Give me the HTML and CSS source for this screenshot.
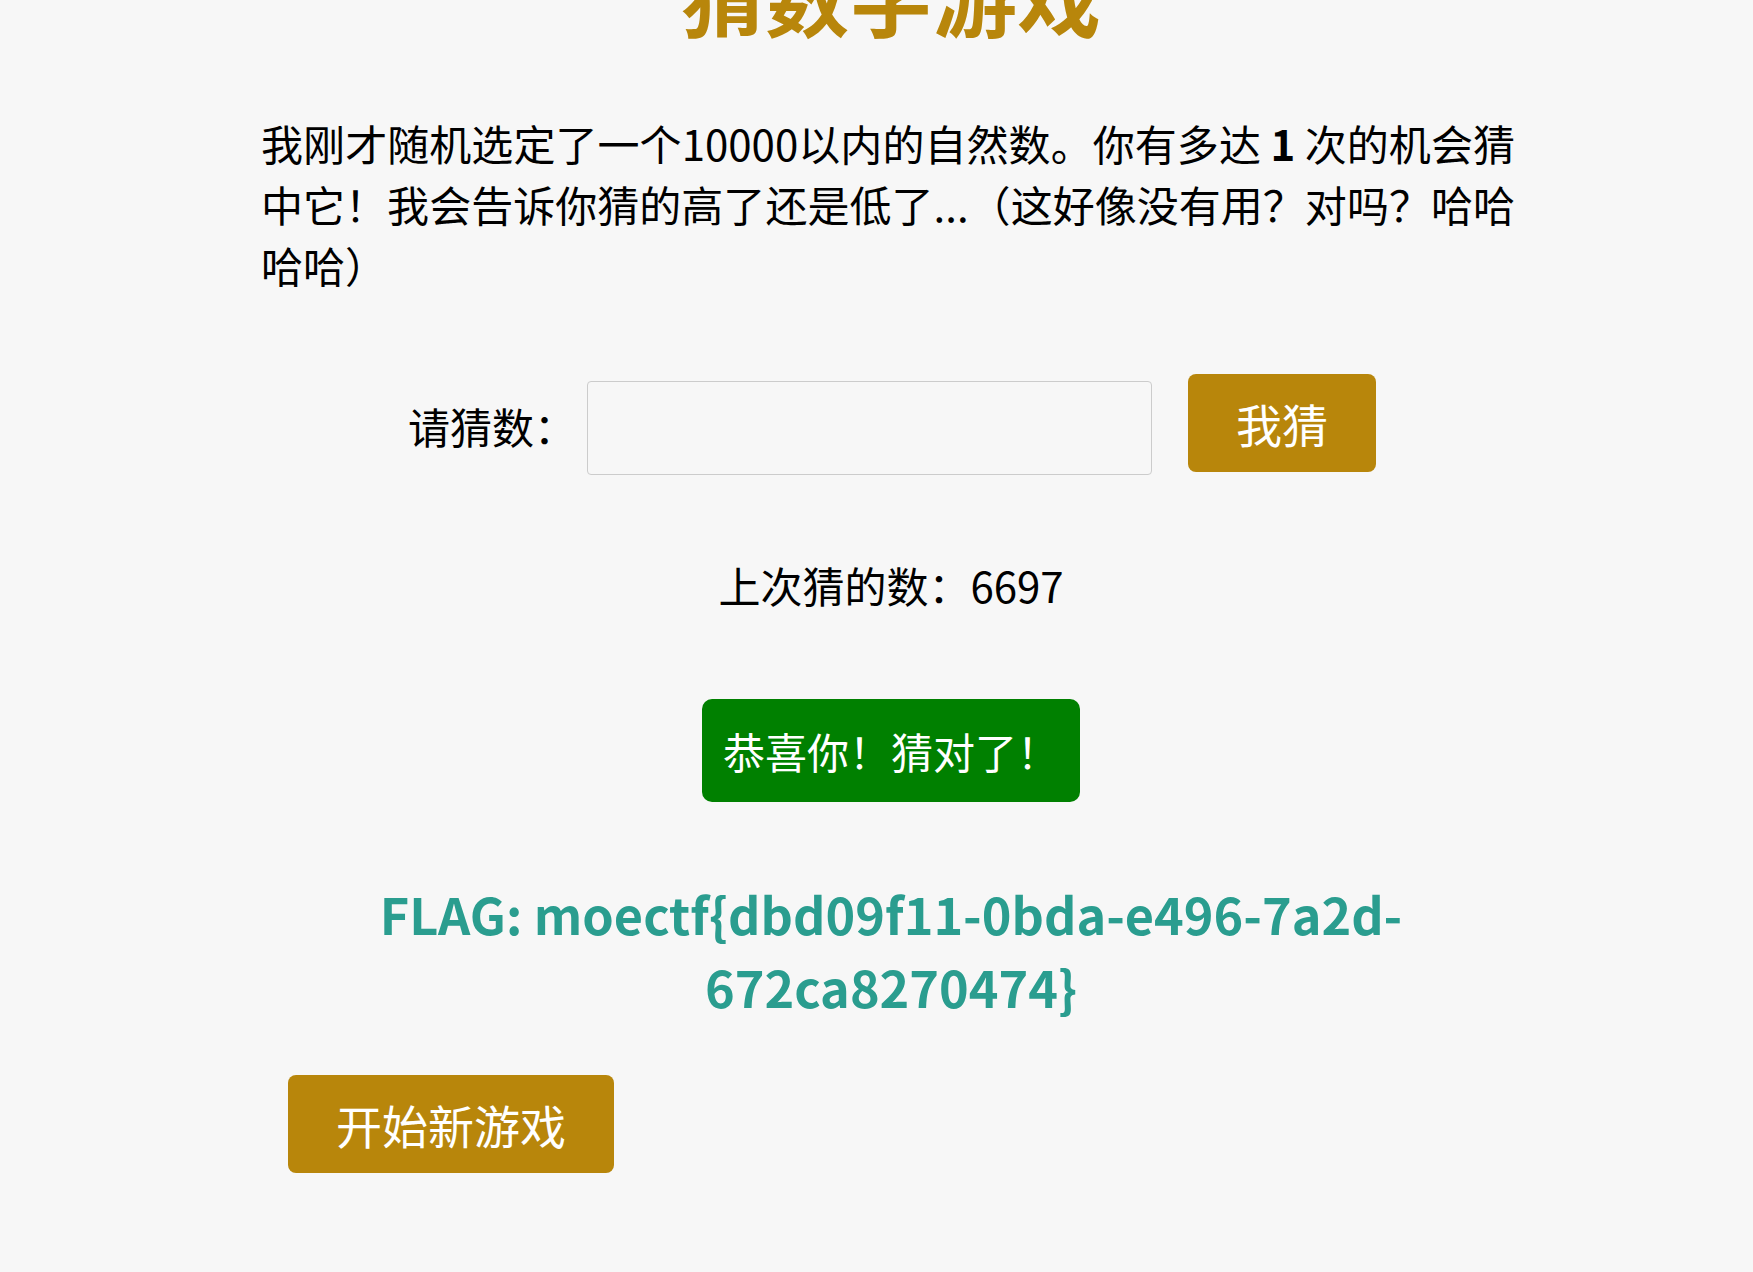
FILE: index.html
```html
<!DOCTYPE html>
<html lang="zh-CN">
<head>
  <meta charset="UTF-8" />
  <meta name="viewport" content="width=device-width, initial-scale=1.0"/>
  <title>猜数字游戏</title>
  <link rel="stylesheet" href="styles.css">
</head>
<body>
  <div class="game">
    <h1 class="title">猜数字游戏</h1>
    <p class="intro">我刚才随机选定了一个10000以内的自然数。你有多达 <strong>1</strong> 次的机会猜中它！我会告诉你猜的高了还是低了...（这好像没有用？对吗？哈哈哈哈）</p>

    <form class="guess-form" onsubmit="return false;">
      <label for="guessInput">请猜数：</label>
      <input type="text" id="guessInput" autocomplete="off">
      <button type="submit" class="btn">我猜</button>
    </form>

    <p class="last-guess">上次猜的数：6697</p>

    <div class="result-row">
      <div class="result">恭喜你！猜对了！</div>
    </div>

    <p class="flag">FLAG: moectf{dbd09f11-0bda-e496-7a2d-672ca8270474}</p>

    <button class="btn restart">开始新游戏</button>
  </div>
</body>
</html>
```

FILE: styles.css
```css
body {
  margin: 0;
  background: #f7f7f7;
  color: #000;
  font-family: "Noto Sans CJK SC", "Noto Sans", sans-serif;
  font-size: 42px;
}

.game {
  width: 1256px;
  margin-left: 263px;
}

.title {
  margin: -66px 0 0;
  font-size: 84px;
  font-weight: bold;
  text-align: center;
  color: #b8860b;
}

.intro {
  margin: 57px 4px 0 -2px;
  text-align: justify;
}

.guess-form {
  display: flex;
  justify-content: center;
  align-items: flex-start;
  margin-top: 79px;
}

.guess-form label {
  margin: 21px 11px 0 2px;
}

.guess-form input {
  width: 565px;
  height: 94px;
  box-sizing: border-box;
  border: 1px solid #ccc;
  border-radius: 4px;
  background: transparent;
  font: inherit;
  padding: 0 16px;
  margin: 7px 36px 0 0;
}

.btn {
  font-family: inherit;
  font-size: 46px;
  color: #fff;
  background: #b8860b;
  border: none;
  border-radius: 8px;
  padding: 16px 48px;
  cursor: pointer;
}

.last-guess {
  margin: 79px 0 0;
  text-align: center;
}

.result-row {
  margin-top: 84px;
  text-align: center;
}

.result {
  display: inline-block;
  background: #008000;
  color: #fff;
  padding: 21px;
  border-radius: 10px;
}

.flag {
  margin: 75px 0 0;
  font-size: 50.4px;
  font-weight: bold;
  color: #2a9d8f;
  text-align: center;
}

.restart {
  margin: 52px 0 0 25px;
}
```
